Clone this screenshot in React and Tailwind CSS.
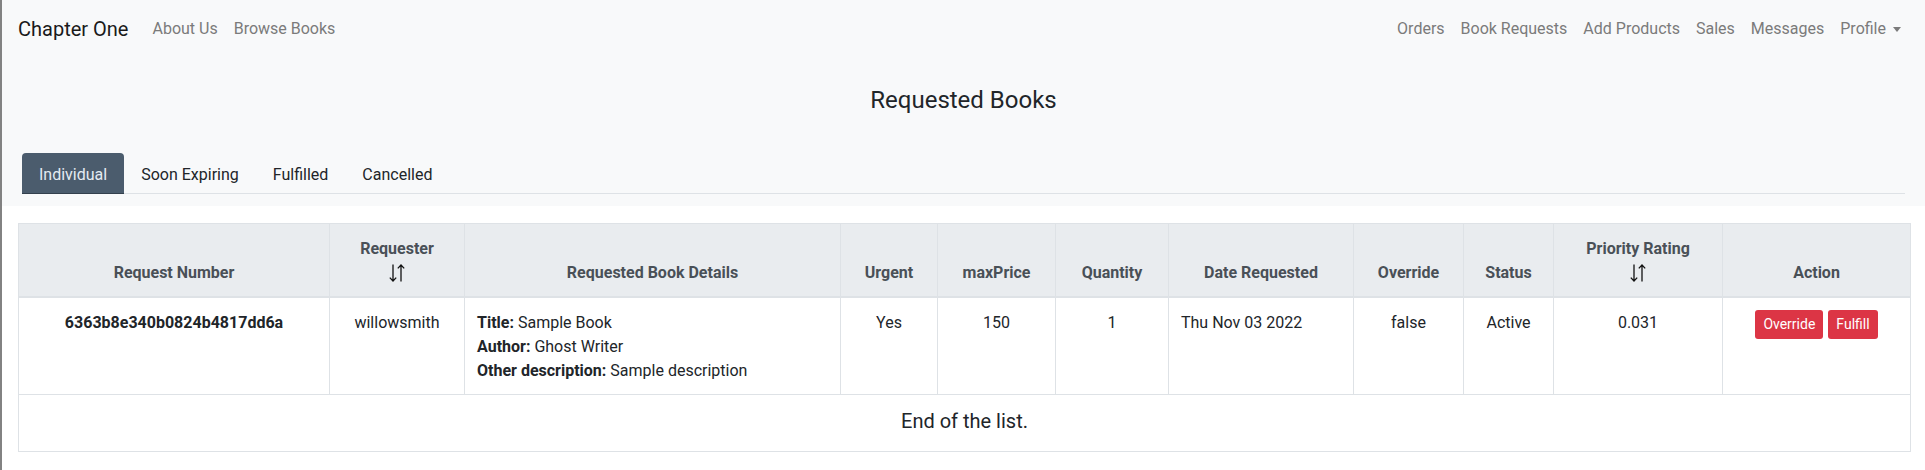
import React from 'react';

const SortArrows = () => (
  <svg width="18" height="20" viewBox="0 0 18 20" fill="none" stroke="#111" strokeWidth="1.3" className="inline-block">
    <path d="M5 1.5v16.5M1.8 14.6 5 18l3.2-3.4" />
    <path d="M13 18.5V2M9.8 5.4 13 2l3.2 3.4" />
  </svg>
);

const columns = [
  { label: 'Request Number', width: 311 },
  { label: 'Requester', width: 135, sort: true },
  { label: 'Requested Book Details', width: 376 },
  { label: 'Urgent', width: 97 },
  { label: 'maxPrice', width: 118 },
  { label: 'Quantity', width: 113 },
  { label: 'Date Requested', width: 185 },
  { label: 'Override', width: 110 },
  { label: 'Status', width: 90 },
  { label: 'Priority Rating', width: 169, sort: true },
  { label: 'Action', width: 188 },
];

const tabs = ['Individual', 'Soon Expiring', 'Fulfilled', 'Cancelled'];

const App = () => {
  return (
    <div
      className="min-h-screen bg-white border-l-2 border-[#828282] text-[#212529] text-base leading-6"
      style={{ fontFamily: 'Roboto, "Liberation Sans", sans-serif' }}
    >
      {/* Top area */}
      <div className="bg-[#f8f9fa] pb-3">
        <nav className="h-14 px-4 pt-[2px] flex items-center justify-between">
          <div className="flex items-center">
            <span className="text-xl text-[#1a1a1a] mr-4">Chapter One</span>
            <a className="px-2 text-[#7b7b7b]">About Us</a>
            <a className="px-2 text-[#7b7b7b]">Browse Books</a>
          </div>
          <div className="flex items-center">
            {['Orders', 'Book Requests', 'Add Products', 'Sales', 'Messages'].map((l) => (
              <a key={l} className="px-2 text-[#7b7b7b]">{l}</a>
            ))}
            <a className="px-2 text-[#7b7b7b] flex items-center">
              Profile
              <span className="ml-[7px] inline-block w-0 h-0 border-l-[4px] border-r-[4px] border-t-[5px] border-l-transparent border-r-transparent border-t-[#7b7b7b]" />
            </a>
          </div>
        </nav>

        <h4 className="mt-[30px] text-center text-2xl leading-[29px] font-normal text-[#212529]">Requested Books</h4>

        <div className="mt-[38px] mx-5 flex border-b border-[#dee2e6]">
          {tabs.map((t, i) => (
            <div
              key={t}
              className={
                i === 0
                  ? 'px-[17px] pt-[10px] pb-[6px] bg-[#4b5c6d] text-[#e4ebf2] rounded-t-[4px] -mb-px border-b border-[#33404d]'
                  : 'px-[17px] pt-[10px] pb-[6px] text-[#212529]'
              }
            >
              {t}
            </div>
          ))}
        </div>
      </div>

      {/* Table */}
      <div className="px-4 pt-[17px]">
        <table className="w-full table-fixed border-collapse">
          <colgroup>
            {columns.map((c) => (
              <col key={c.label} style={{ width: c.width }} />
            ))}
          </colgroup>
          <thead>
            <tr className="bg-[#e9ecef]">
              {columns.map((c) => (
                <th
                  key={c.label}
                  className="px-3 pt-[13px] pb-[11px] align-bottom text-center font-bold text-[#495057] border border-[#dee2e6] border-b-2"
                >
                  <div>{c.label}</div>
                  {c.sort && (
                    <div className="h-6 flex items-center justify-center">
                      <SortArrows />
                    </div>
                  )}
                </th>
              ))}
            </tr>
          </thead>
          <tbody>
            <tr>
              <td className="px-3 pt-[13px] pb-[11px] align-top text-center font-bold border border-[#dee2e6]">6363b8e340b0824b4817dd6a</td>
              <td className="px-3 pt-[13px] pb-[11px] align-top text-center border border-[#dee2e6]">willowsmith</td>
              <td className="px-3 pt-[13px] pb-[11px] align-top text-left border border-[#dee2e6]">
                <div><b>Title:</b> Sample Book</div>
                <div><b>Author:</b> Ghost Writer</div>
                <div><b>Other description:</b> Sample description</div>
              </td>
              <td className="px-3 pt-[13px] pb-[11px] align-top text-center border border-[#dee2e6]">Yes</td>
              <td className="px-3 pt-[13px] pb-[11px] align-top text-center border border-[#dee2e6]">150</td>
              <td className="px-3 pt-[13px] pb-[11px] align-top text-center border border-[#dee2e6]">1</td>
              <td className="px-3 pt-[13px] pb-[11px] align-top text-left border border-[#dee2e6]">Thu Nov 03 2022</td>
              <td className="px-3 pt-[13px] pb-[11px] align-top text-center border border-[#dee2e6]">false</td>
              <td className="px-3 pt-[13px] pb-[11px] align-top text-center border border-[#dee2e6]">Active</td>
              <td className="px-3 pt-[13px] pb-[11px] align-top text-center border border-[#dee2e6]">0.031</td>
              <td className="px-3 pt-3 pb-3 align-top border border-[#dee2e6]">
                <div className="flex justify-center gap-[5px]">
                  <button className="px-2 py-1 text-sm leading-[21px] text-white bg-[#dc3545] rounded-[3px]">Override</button>
                  <button className="px-2 py-1 text-sm leading-[21px] text-white bg-[#dc3545] rounded-[3px]">Fulfill</button>
                </div>
              </td>
            </tr>
            <tr>
              <td colSpan={11} className="px-3 pt-[14px] pb-[18px] text-center border border-[#dee2e6]">
                <h5 className="text-xl leading-6 font-normal">End of the list.</h5>
              </td>
            </tr>
          </tbody>
        </table>
      </div>
    </div>
  );
};

export default App;
